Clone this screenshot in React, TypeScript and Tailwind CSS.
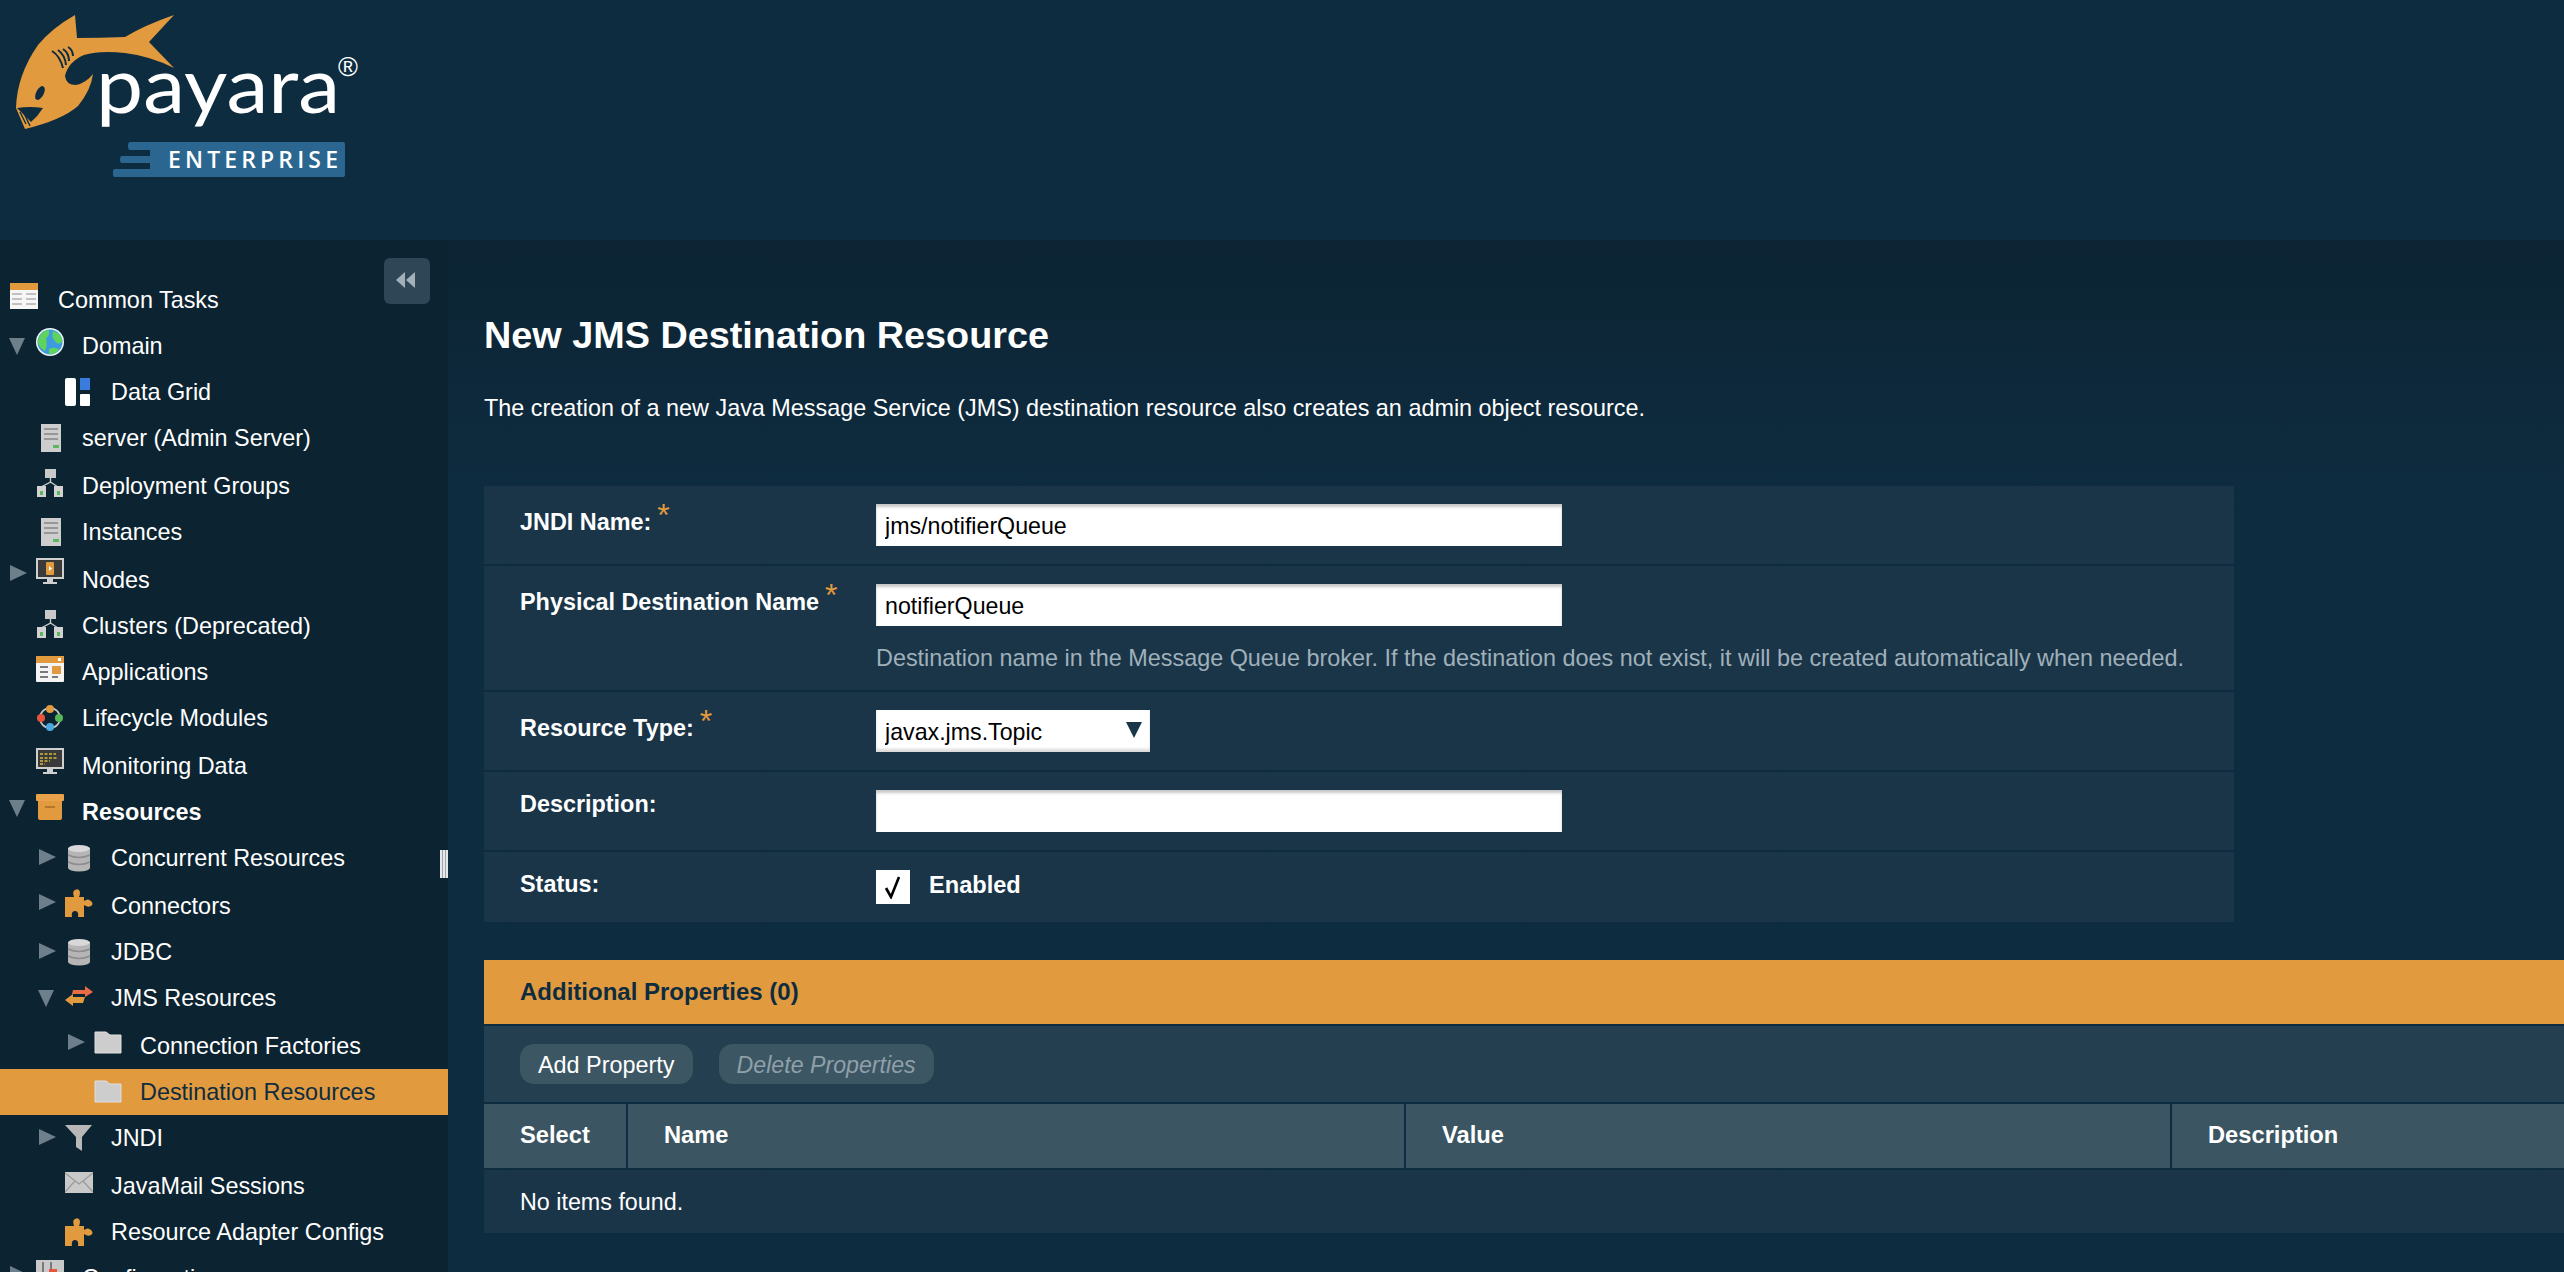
import React from "react";

const ORANGE = "#e29a3e";

const Logo = () => (
  <svg width="370" height="190" viewBox="0 0 370 190" className="block">
    <path
      fill={ORANGE}
      d="M75 15 L77 38 Q100 38 125 37 Q145 25 174 15 L149 42 L174 68 Q150 56 125 53 Q100 50 84 55 Q68 62 65 76 Q66 85 76 85 Q86 83 93 74 Q91 90 78 106 Q62 120 25 129 L16 108 Q17 75 38 45 Q52 28 75 15 Z"
    />
    <path fill="#0e2c40" d="M17 108 Q30 106 43 108 Q38 116 31 122 Q23 114 17 108 Z" />
    <path stroke="#0e2c40" strokeWidth="1.4" fill="none" d="M20 112 L26 124 M23 111 L30 126" />
    <ellipse cx="40" cy="93" rx="3.8" ry="7.5" transform="rotate(28 40 93)" fill="#0e2c40" />
    <path
      stroke="#0e2c40"
      strokeWidth="2"
      fill="none"
      d="M52 51 Q60 56 63 68 M58 50 Q65 55 66 65 M63 49 Q69 53 69 61 M68 47 Q73 50 73 56"
    />
    <text x="96" y="113" fill="#fff" fontSize="78" fontFamily="Lato, sans-serif" textLength="244" lengthAdjust="spacingAndGlyphs">
      payara
    </text>
    <text x="338" y="76" fill="#fff" fontSize="27" fontFamily="'Liberation Sans', sans-serif">
      ®
    </text>
    <path
      fill="#2a6690"
      d="M130 142 H343 Q345 142 345 144 V175 Q345 177 343 177 H115 Q113 177 113 175 V171 Q113 169 115 169 H150 V163 H122 Q120 163 120 160 Q120 156 122 156 H150 V150 H130 Q128 150 128 146 Q128 142 130 142 Z"
    />
    <text x="168" y="167.5" fill="#fff" fontSize="23" fontWeight="600" fontFamily="'Open Sans', sans-serif" textLength="170">
      ENTERPRISE
    </text>
  </svg>
);

const Arrow = ({ open }: { open?: boolean }) => (
  <svg width="20" height="20" viewBox="0 0 20 20" className="block">
    <path fill="#6d7f8a" d={open ? "M1 2 H17 L9 19 Z" : "M2 2 L19 10 L2 18 Z"} />
  </svg>
);

const Box = ({ children }: { children: React.ReactNode }) => (
  <svg width="28" height="28" viewBox="0 0 28 28" className="block">
    {children}
  </svg>
);

const TasksIcon = () => (
  <Box>
    <rect x="0" y="1" width="28" height="26" fill="#f6f6f6" />
    <rect x="0" y="1" width="28" height="7" fill={ORANGE} />
    <path stroke="#b0b0b0" strokeWidth="1.4" d="M2 12 H12 M16 12 H26 M2 17 H12 M16 17 H26 M2 22 H12 M16 22 H26" />
  </Box>
);

const GlobeIcon = () => (
  <Box>
    <circle cx="14" cy="14" r="14" fill="#eef6f8" />
    <circle cx="14" cy="14" r="12.5" fill="#3f9be0" />
    <path fill="#5fd35c" d="M1.5 13 Q5 2 13 2 Q14 8 10 10 Q12 16 9 23 Q3 20 1.5 13 Z M17 3 Q25 5 26.5 13 Q23 18 20 14 Q15 11 17 3 Z M13 21 Q20 18 23 22 Q18 27 13 26 Z" />
  </Box>
);

const GridIcon = () => (
  <Box>
    <rect x="0" y="0" width="11" height="28" rx="2" fill="#fff" />
    <rect x="15" y="0" width="10" height="12" fill="#3b7bdc" />
    <rect x="15" y="16" width="10" height="12" rx="1" fill="#fff" />
  </Box>
);

const ServerIcon = () => (
  <Box>
    <rect x="5" y="0" width="20" height="28" fill="#cdcdcd" />
    <path stroke="#979797" strokeWidth="2" d="M8 5 H22 M8 10 H22 M8 15 H22" />
    <rect x="17" y="21" width="6" height="3" fill="#5cb85c" />
  </Box>
);

const TreeIcon = () => (
  <Box>
    <rect x="9" y="0" width="11" height="9" fill="#c9c9c9" />
    <path stroke="#c9c9c9" strokeWidth="1.4" fill="none" d="M14.5 9 V13 L5 18 M14.5 13 L22 18" />
    <rect x="1" y="17" width="9" height="11" fill="#d2d2d2" />
    <rect x="18" y="17" width="9" height="11" fill="#d2d2d2" />
    <rect x="4" y="22" width="3" height="4" fill="#5cb85c" />
    <rect x="21" y="22" width="3" height="4" fill="#5cb85c" />
  </Box>
);

const Monitor = ({ children }: { children: React.ReactNode }) => (
  <Box>
    <rect x="0" y="0" width="28" height="21" fill="#cfcfcf" />
    <rect x="2" y="2" width="24" height="17" fill="#3a3a3a" />
    <path fill="#cfcfcf" d="M11 21 H17 V24 H21 V26 H7 V24 H11 Z" />
    {children}
  </Box>
);

const AppsIcon = () => (
  <Box>
    <rect x="0" y="1" width="28" height="26" rx="1" fill="#f4f4f4" />
    <rect x="0" y="1" width="28" height="7" fill={ORANGE} />
    <rect x="22" y="3" width="3" height="3" fill="#fff" />
    <path stroke="#7a7a7a" strokeWidth="2" d="M4 12 H12 M4 17 H12 M4 22 H12 M16 22 H22" />
    <rect x="16" y="11" width="9" height="8" fill={ORANGE} />
  </Box>
);

const LifecycleIcon = () => (
  <Box>
    <circle cx="14" cy="14" r="10" fill="none" stroke="#c9c9c9" strokeWidth="1.6" />
    <circle cx="14" cy="5" r="4" fill={ORANGE} />
    <circle cx="5" cy="14" r="4" fill="#e8553a" />
    <circle cx="23" cy="14" r="4" fill="#55b95a" />
    <circle cx="14" cy="23" r="4" fill="#4aa8e0" />
  </Box>
);

const BoxIcon = () => (
  <Box>
    <rect x="2" y="4" width="24" height="22" rx="2" fill={ORANGE} />
    <rect x="0" y="0" width="28" height="7" rx="1" fill="#e9a24a" />
    <rect x="9" y="12" width="10" height="2" fill="#b5762a" />
  </Box>
);

const DbIcon = () => (
  <Box>
    <rect x="3" y="4" width="22" height="20" fill="#b5b5b5" />
    <ellipse cx="14" cy="24" rx="11" ry="3.5" fill="#b5b5b5" />
    <ellipse cx="14" cy="4.5" rx="11" ry="3.5" fill="#d8d8d8" />
    <path fill="none" stroke="#8c8c8c" strokeWidth="1.6" d="M3 11 Q14 16 25 11 M3 18 Q14 23 25 18" />
  </Box>
);

const PuzzleIcon = () => (
  <Box>
    <path
      fill={ORANGE}
      d="M0 8 H9 Q7 2 10 1 Q14 -1 15 3 Q15 6 14 8 H19 V12 Q23 9 26 12 Q29 15 26 17 Q23 19 19 16 V28 H13 Q14 22 10 22 Q6 22 7 28 H0 Z"
    />
  </Box>
);

const SwapIcon = () => (
  <Box>
    <path fill="#ec6b47" d="M8 6 H20 V2 L28 8 L20 13 V10 H7 Z" />
    <path fill={ORANGE} d="M20 13 H8 V10 L0 16 L8 22 V19 H18 Z" />
  </Box>
);

const FolderIcon = () => (
  <Box>
    <path fill="#cdcdcd" stroke="#dedede" d="M1 3 H12 L16 6 H27 V24 H1 Z" />
  </Box>
);

const FilterIcon = () => (
  <Box>
    <path fill="#b8b8b8" d="M0 1 H27 L17 13 V27 L11 23 V13 Z" />
  </Box>
);

const MailIcon = () => (
  <Box>
    <rect x="0" y="3" width="28" height="21" fill="#c9c9c9" />
    <path fill="none" stroke="#9a9a9a" strokeWidth="1.2" d="M0 4 L14 15 L28 4 M0 23 L10 12 M28 23 L18 12" />
  </Box>
);

const ConfigIcon = () => (
  <Box>
    <rect x="0" y="0" width="28" height="28" fill="#c9c9c9" />
    <path stroke="#666" strokeWidth="1.6" d="M7 2 V26 M15 2 V26" />
    <rect x="13" y="9" width="8" height="6" fill="#e8553a" />
  </Box>
);

const NodesGlyph = () => (
  <Monitor>
    <rect x="10" y="4" width="8" height="13" rx="1" fill={ORANGE} />
    <path fill="#fff" d="M13 8 L16 10.5 L13 13 Z" />
  </Monitor>
);

const MonitoringGlyph = () => (
  <Monitor>
    <path stroke="#d6b93c" strokeWidth="1.6" strokeDasharray="3 1.5" d="M4 6 H20 M4 10 H22 M4 13 H14 M4 16 H9" />
  </Monitor>
);

type Item = {
  label: string;
  icon: React.ComponentType;
  level: 0 | 1 | 2;
  arrow?: "open" | "closed";
  row: string;
  iconShift?: string;
  arrowShift?: string;
  labelShift?: string;
  bold?: boolean;
  selected?: boolean;
};

const items: Item[] = [
  { label: "Domain", icon: GlobeIcon, level: 0, arrow: "open", row: "h-[46px]", iconShift: "-mt-2" },
  { label: "Data Grid", icon: GridIcon, level: 1, row: "h-[46px]" },
  { label: "server (Admin Server)", icon: ServerIcon, level: 0, row: "h-[46px]" },
  { label: "Deployment Groups", icon: TreeIcon, level: 0, row: "h-[48px]", iconShift: "-mt-1", labelShift: "mt-[2px]" },
  { label: "Instances", icon: ServerIcon, level: 0, row: "h-[46px]" },
  { label: "Nodes", icon: NodesGlyph, level: 0, arrow: "closed", row: "h-[48px]", iconShift: "-mt-3.5", arrowShift: "-mt-3", labelShift: "mt-[2px]" },
  { label: "Clusters (Deprecated)", icon: TreeIcon, level: 0, row: "h-[46px]", iconShift: "-mt-1" },
  { label: "Applications", icon: AppsIcon, level: 0, row: "h-[46px]", iconShift: "-mt-1.5" },
  { label: "Lifecycle Modules", icon: LifecycleIcon, level: 0, row: "h-[46px]" },
  { label: "Monitoring Data", icon: MonitoringGlyph, level: 0, row: "h-[48px]", iconShift: "-mt-1.5", labelShift: "mt-[2px]" },
  { label: "Resources", icon: BoxIcon, level: 0, arrow: "open", row: "h-[46px]", iconShift: "-mt-2", arrowShift: "-mt-2", bold: true },
  { label: "Concurrent Resources", icon: DbIcon, level: 1, arrow: "closed", row: "h-[46px]", arrowShift: "-mt-0.5" },
  { label: "Connectors", icon: PuzzleIcon, level: 1, arrow: "closed", row: "h-[48px]", iconShift: "-mt-1", arrowShift: "-mt-1.5", labelShift: "mt-[2px]" },
  { label: "JDBC", icon: DbIcon, level: 1, arrow: "closed", row: "h-[45px]", arrowShift: "-mt-0.5" },
  { label: "JMS Resources", icon: SwapIcon, level: 1, arrow: "open", row: "h-[47px]" },
  { label: "Connection Factories", icon: FolderIcon, level: 2, arrow: "closed", row: "h-[48px]", iconShift: "-mt-1", arrowShift: "-mt-1.5", labelShift: "mt-[2px]" },
  { label: "Destination Resources", icon: FolderIcon, level: 2, row: "h-[46px]", selected: true },
  { label: "JNDI", icon: FilterIcon, level: 1, arrow: "closed", row: "h-[45px]", arrowShift: "-mt-0.5" },
  { label: "JavaMail Sessions", icon: MailIcon, level: 1, row: "h-[49px]", iconShift: "-mt-1", labelShift: "mt-[2px]" },
  { label: "Resource Adapter Configs", icon: PuzzleIcon, level: 1, row: "h-[46px]" },
  { label: "Configurations", icon: ConfigIcon, level: 0, arrow: "closed", row: "h-[46px]", iconShift: "-mt-2", arrowShift: "-mt-2" },
];

const levelPad = { 0: "pl-[8px]", 1: "pl-[37px]", 2: "pl-[66px]" };

const TreeRow = ({ item }: { item: Item }) => {
  const Icon = item.icon;
  return (
    <div
      className={`flex items-center text-[23.4px] ${item.row} ${levelPad[item.level]} ${
        item.selected ? "bg-[#e29a3e] text-[#0e2c40]" : "text-white"
      } ${item.bold ? "font-bold" : ""}`}
    >
      <div className={`w-[28px] shrink-0 ${item.arrowShift ?? ""}`}>
        {item.arrow && <Arrow open={item.arrow === "open"} />}
      </div>
      <div className={`shrink-0 ${item.iconShift ?? ""}`}>
        <Icon />
      </div>
      <span className={`ml-[18px] whitespace-nowrap pt-[2px] ${item.labelShift ?? ""}`}>{item.label}</span>
    </div>
  );
};

const Sidebar = () => (
  <aside className="relative w-[448px] shrink-0 overflow-hidden bg-[#0c2331] pt-[37px]">
    <button className="absolute left-[384px] top-[18px] flex h-[46px] w-[46px] items-center justify-center rounded-[6px] bg-[#2f4656]">
      <svg width="20" height="16" viewBox="0 0 20 16" className="-ml-[2px] -mt-[2px]">
        <path fill="#a3b0b8" d="M9 0 V16 L0 8 Z M19 0 V16 L10 8 Z" />
      </svg>
    </button>
    <div className="absolute left-[440px] top-[610px] h-[28px] w-[8px] bg-[repeating-linear-gradient(90deg,#e5e7e9_0,#e5e7e9_2px,#9aa5ac_2px,#9aa5ac_3px)]" />
    <div className="flex h-[46px] items-center pl-[10px] text-[23.4px] text-white">
      <div className="-mt-2 shrink-0">
        <TasksIcon />
      </div>
      <span className="ml-[20px] pt-[2px]">Common Tasks</span>
    </div>
    {items.map((item) => (
      <TreeRow key={item.label} item={item} />
    ))}
  </aside>
);

const Star = () => (
  <span className="ml-[6px] -mt-[8px] inline-block h-[20px] align-top text-[32px] font-normal leading-[30px] text-[#e29a3e]">*</span>
);

const inputClass =
  "block h-[42px] w-[686px] bg-white px-[9px] pt-[2px] text-[23.2px] text-black shadow-[inset_0_3px_3px_rgba(0,0,0,0.22)] outline-none";

const FormRow = ({ label, star, height, labelTop, children }: {
  label: string;
  star?: boolean;
  height: string;
  labelTop: string;
  children: React.ReactNode;
}) => (
  <div className={`grid grid-cols-[356px_1fr] bg-[#1a3548] pl-[36px] ${height}`}>
    <div className={`whitespace-nowrap text-[23.4px] font-bold leading-[28px] text-white ${labelTop}`}>
      {label}
      {star && <Star />}
    </div>
    <div className="pt-[18px]">{children}</div>
  </div>
);

const Form = () => (
  <div className="flex w-[1750px] flex-col gap-[2px]">
    <FormRow label="JNDI Name:" star height="h-[78px]" labelTop="pt-[22px]">
      <input readOnly value="jms/notifierQueue" className={inputClass} />
    </FormRow>
    <FormRow label="Physical Destination Name" star height="h-[124px]" labelTop="pt-[22px]">
      <input readOnly value="notifierQueue" className={inputClass} />
      <p className="mt-[18px] whitespace-nowrap text-[23.4px] leading-[28px] text-[#9fb0ba]">
        Destination name in the Message Queue broker. If the destination does not exist, it will be created automatically when needed.
      </p>
    </FormRow>
    <FormRow label="Resource Type:" star height="h-[78px]" labelTop="pt-[22px]">
      <div className="relative w-[274px]">
        <select className="block h-[42px] w-full appearance-none bg-white px-[9px] pt-[2px] text-[23.2px] text-black shadow-[inset_0_-3px_3px_rgba(0,0,0,0.15)] outline-none">
          <option>javax.jms.Topic</option>
        </select>
        <svg width="16" height="16" viewBox="0 0 16 16" className="pointer-events-none absolute right-[8px] top-[12px]">
          <path fill="#1b3649" d="M0 0 H16 L8 16 Z" />
        </svg>
      </div>
    </FormRow>
    <FormRow label="Description:" height="h-[78px]" labelTop="pt-[18px]">
      <input readOnly value="" className={inputClass} />
    </FormRow>
    <FormRow label="Status:" height="h-[70px]" labelTop="pt-[18px]">
      <div className="flex items-center">
        <div className="flex h-[34px] w-[34px] items-center justify-center bg-white">
          <svg width="18" height="24" viewBox="0 0 18 24">
            <path fill="none" stroke="#000" strokeWidth="2.6" d="M2 13 L7 22 L15 2" />
          </svg>
        </div>
        <span className="-mt-[2px] ml-[19px] text-[23.6px] font-bold text-white">Enabled</span>
      </div>
    </FormRow>
  </div>
);

const PropertiesTable = () => (
  <div className="mt-[38px] flex flex-col gap-[2px]">
    <div className="flex h-[64px] items-center bg-[#e29a3e] pl-[36px] text-[24px] font-bold text-[#0e2c40]">
      Additional Properties (0)
    </div>
    <div className="flex h-[76px] items-center gap-[26px] bg-[#243f4f] pl-[36px]">
      <button className="h-[40px] rounded-[14px] bg-[#3c5663] px-[18px] pt-[3px] text-[23.4px] text-white">Add Property</button>
      <button className="h-[40px] rounded-[14px] bg-[#3c5663] px-[18px] pt-[2px] text-[23.2px] italic text-[#8fa0aa]">Delete Properties</button>
    </div>
    <div className="grid h-[64px] grid-cols-[142px_776px_764px_1fr] gap-x-[2px] text-[23.7px] font-bold text-white">
      <div className="flex items-center bg-[#3b5562] pl-[36px]">Select</div>
      <div className="flex items-center bg-[#3b5562] pl-[36px]">Name</div>
      <div className="flex items-center bg-[#3b5562] pl-[36px]">Value</div>
      <div className="flex items-center bg-[#3b5562] pl-[36px]">Description</div>
    </div>
    <div className="flex h-[63px] items-center bg-[#1a3448] pl-[36px] pt-[2px] text-[23.3px] text-white">No items found.</div>
  </div>
);

export default function App() {
  return (
    <div className="flex h-screen flex-col overflow-hidden bg-[#0e2c40] font-['Liberation_Sans',Arial,sans-serif]">
      <header className="h-[240px] shrink-0 bg-[#0e2c40]">
        <Logo />
      </header>
      <div className="flex min-h-0 flex-1">
        <Sidebar />
        <main className="min-w-0 flex-1 bg-gradient-to-b from-[#0c2433] to-[#0e2c40] to-[25%] pl-[36px]">
          <h1 className="mt-[72px] text-[37.8px] font-bold leading-[46px] text-white">New JMS Destination Resource</h1>
          <p className="mt-[36px] text-[23.4px] leading-[28px] text-white">
            The creation of a new Java Message Service (JMS) destination resource also creates an admin object resource.
          </p>
          <div className="mt-[64px]">
            <Form />
            <PropertiesTable />
          </div>
        </main>
      </div>
    </div>
  );
}
